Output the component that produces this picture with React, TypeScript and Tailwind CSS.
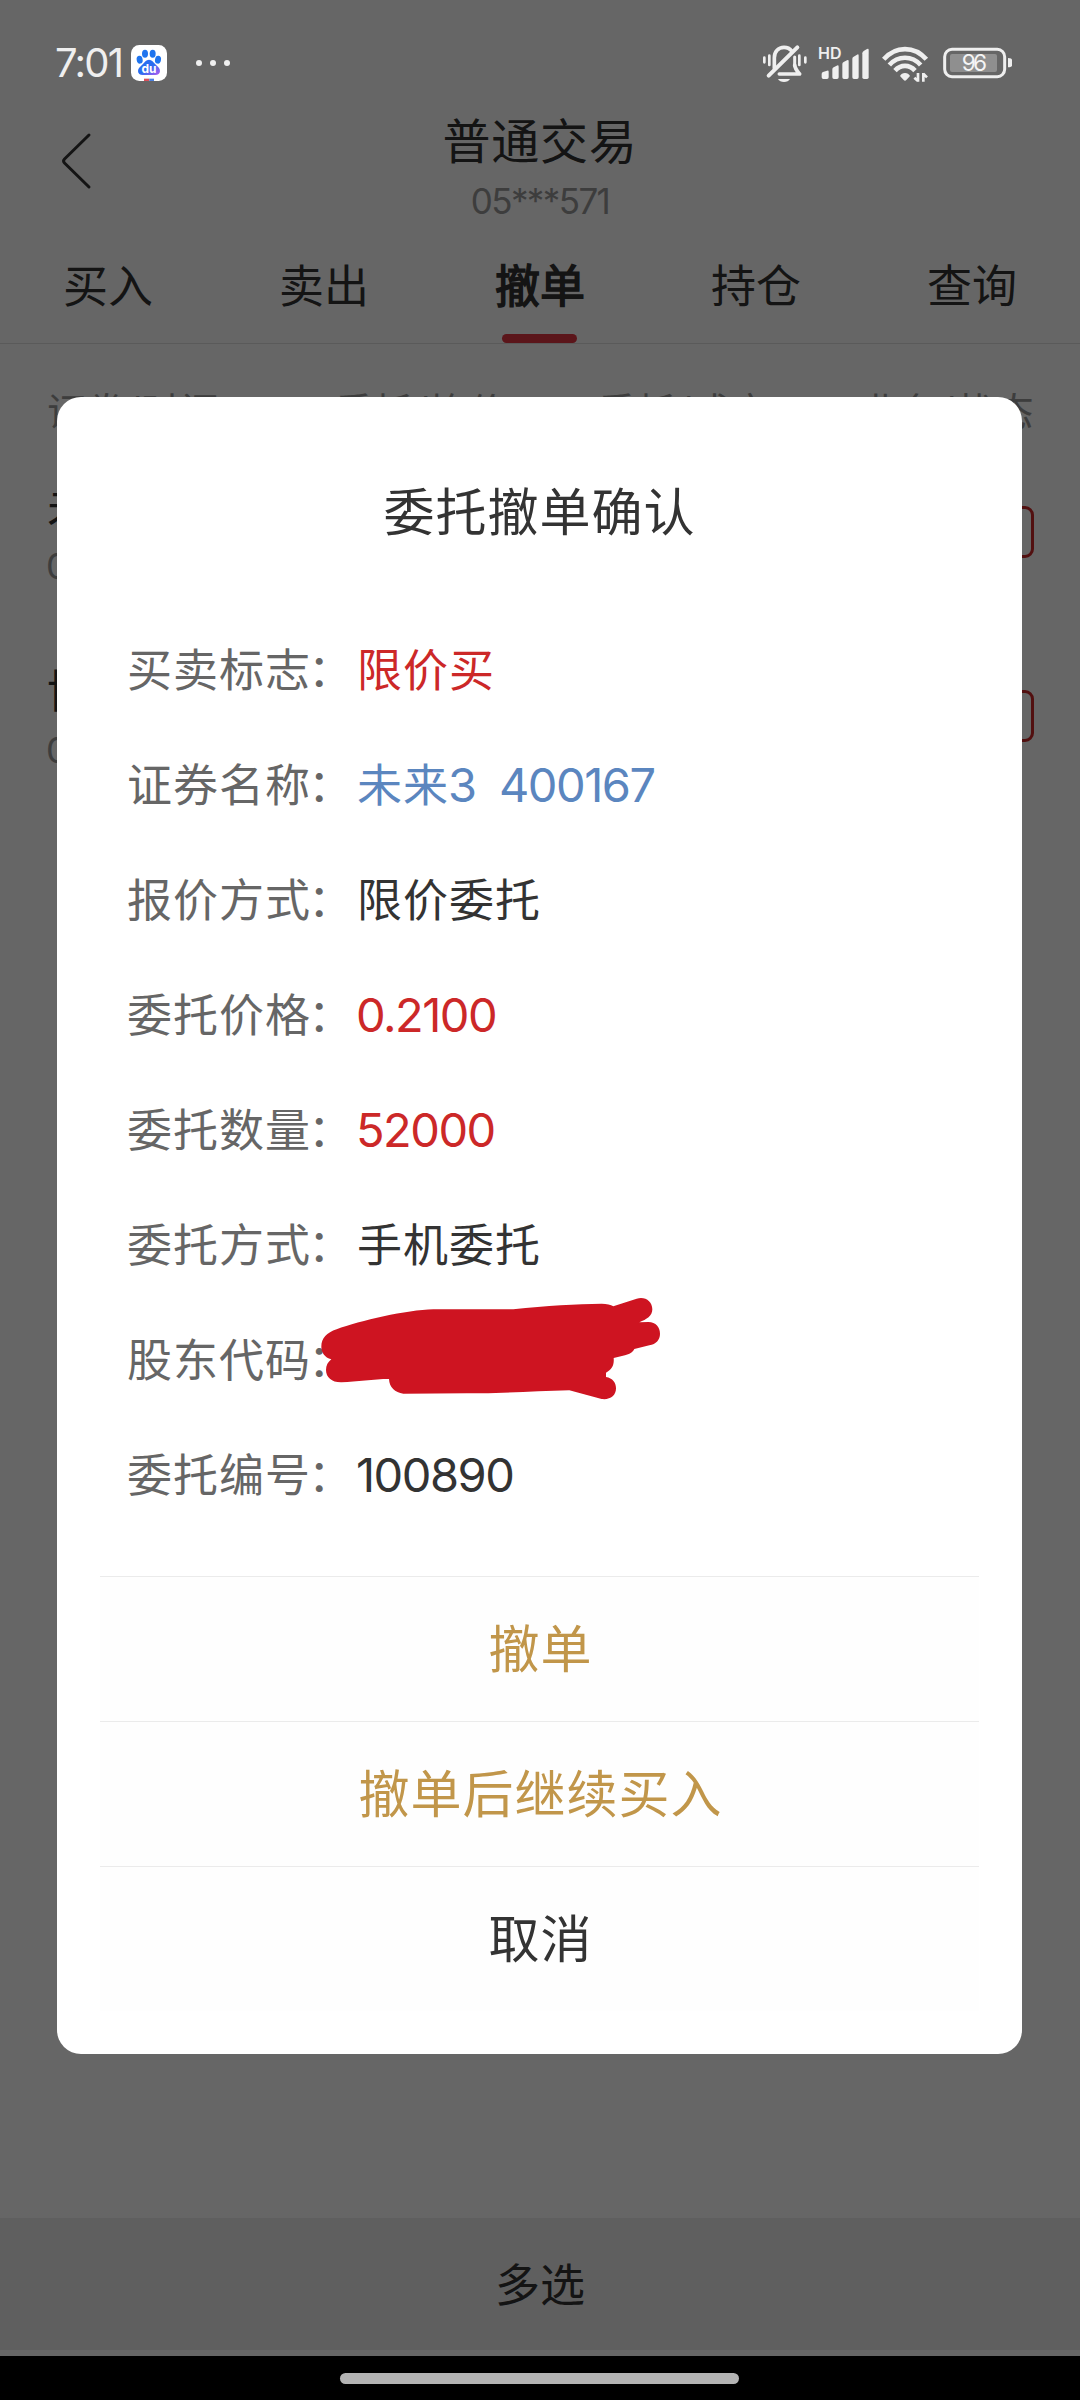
import type { ReactNode } from "react";

const TABS = ["买入", "卖出", "撤单", "持仓", "查询"];
const ACTIVE_TAB = "撤单";

const ORDERS = [
  { name: "未来3", time: "09:15:02" },
  { name: "博士眼镜", time: "09:15:02" },
];

type Detail = { label: string; text?: string; digits?: string; color: string; redacted?: boolean };

const DETAILS: Detail[] = [
  { label: "买卖标志", text: "限价买", color: "text-[#cc2828]" },
  { label: "证券名称", text: "未来", digits: "3  400167", color: "text-[#5b86bf]" },
  { label: "报价方式", text: "限价委托", color: "text-[#333333]" },
  { label: "委托价格", digits: "0.2100", color: "text-[#cc2828]" },
  { label: "委托数量", digits: "52000", color: "text-[#cc2828]" },
  { label: "委托方式", text: "手机委托", color: "text-[#333333]" },
  { label: "股东代码", color: "text-[#333333]", redacted: true },
  { label: "委托编号", digits: "100890", color: "text-[#333333]" },
];

const ACTIONS = [
  { label: "撤单", color: "text-[#c1964a]" },
  { label: "撤单后继续买入", color: "text-[#c1964a]" },
  { label: "取消", color: "text-[#333333]" },
];

function BaiduIcon() {
  return (
    <svg width="36" height="36" viewBox="0 0 108 108" aria-hidden>
      <defs>
        <linearGradient id="paw" x1="0" y1="0" x2="1" y2="1">
          <stop offset="0.5" stopColor="#2a6df0" />
          <stop offset="1" stopColor="#b45cf0" />
        </linearGradient>
      </defs>
      <rect width="108" height="108" rx="25" fill="#fff" />
      <g fill="#1f74ee">
        <ellipse cx="26" cy="44" rx="9" ry="12" transform="rotate(-10 26 44)" />
        <ellipse cx="42" cy="26" rx="9" ry="12" />
        <ellipse cx="65" cy="26" rx="9" ry="12" />
        <ellipse cx="81" cy="44" rx="9" ry="12" transform="rotate(10 81 44)" />
      </g>
      <path
        d="M54 44C63 44 67 51 73 58C81 65 87 70 87 78C87 86 81 90 73 90H35C27 90 21 86 21 78C21 70 28 65 35 58C41 51 45 44 54 44Z"
        fill="url(#paw)"
      />
      <text x="54" y="84" textAnchor="middle" fontSize="36" fontWeight="700" fill="#fff" className="font-['Inter',sans-serif]">
        du
      </text>
      <rect x="39" y="101" width="16" height="7" fill="#d9505a" />
      <rect x="55" y="101" width="14" height="7" fill="#4a80e0" />
    </svg>
  );
}

function MuteIcon() {
  return (
    <svg width="46" height="40" viewBox="0 0 138 120" fill="none" stroke="#efefef" strokeLinecap="round" aria-hidden>
      <g strokeWidth="8">
        <path d="M7 44V58M22 38V66M112 38V66M130 44V58" />
        <path d="M98 42V68" strokeWidth="9" />
      </g>
      <path d="M37 76V44C37 26 49 13 66 13C76 13 84 17 89 24" strokeWidth="11" />
      <path d="M106 13L20 98" strokeWidth="12" />
      <path d="M98 66C99 78 106 85 113 93H52" strokeWidth="11" strokeLinejoin="round" />
      <path d="M48 108H84C81 114 74 117 66 117C58 117 51 114 48 108Z" fill="#efefef" stroke="none" />
    </svg>
  );
}

function SignalIcon() {
  return (
    <svg width="52" height="36" viewBox="0 0 156 108" fill="#efefef" className="overflow-visible" aria-hidden>
      <text x="-3" y="43" fontSize="48" fontWeight="600" className="font-['Inter',sans-serif]">
        HD
      </text>
      <path d="M8 87Q8 83 12 81L24 77Q29 75 29 80V97Q29 102 24 102H13Q8 102 8 97Z" />
      <path d="M40 73Q40 69 44 67L53 62Q59 59 59 65V97Q59 102 54 102H45Q40 102 40 97Z" />
      <path d="M70 57Q70 53 74 51L84 46Q89 43 89 49V97Q89 102 84 102H75Q70 102 70 97Z" />
      <path d="M100 41Q100 37 104 35L114 29Q119 26 119 32V97Q119 102 114 102H105Q100 102 100 97Z" />
      <path d="M130 25Q130 21 134 18L144 12Q149 9 149 15V97Q149 102 144 102H135Q130 102 130 97Z" />
    </svg>
  );
}

function WifiIcon() {
  return (
    <svg width="48" height="38" viewBox="0 0 144 114" fill="none" stroke="#efefef" aria-hidden>
      <g strokeWidth="14">
        <path d="M5 43C41 2 97 2 133 43" />
        <path d="M22 60C48 31 90 31 116 60" />
        <path d="M39 77C56 58 82 58 99 77" />
      </g>
      <path d="M69 84C76 84 81 88 84 93L73 105Q69 109 65 105L54 93C57 88 62 84 69 84Z" fill="#efefef" stroke="none" />
      <path d="M108 84V110M108 108L97 98M124 110V84M124 86L135 97" strokeWidth="8" />
    </svg>
  );
}

function BatteryIcon() {
  return (
    <svg width="70" height="32" viewBox="0 0 210 96" className="overflow-visible" aria-hidden>
      <rect x="5" y="7" width="180" height="82" rx="22" fill="none" stroke="#efefef" strokeWidth="9" />
      <rect x="21" y="21" width="141" height="54" rx="6" fill="#8f8f8f" />
      <path d="M195 33Q207 33 207 39V55Q207 61 195 61Z" fill="#efefef" />
      <text x="94" y="73" textAnchor="middle" fontSize="68" fontWeight="400" textLength="76" fill="#f5f5f5" className="font-['Inter',sans-serif]">
        96
      </text>
    </svg>
  );
}

// Floats above the dimming layer, the way the system draws it
function StatusBar() {
  return (
    <div className="relative z-20 flex h-[126px] items-center justify-between pl-[55px] pr-[67px]">
      <div className="flex items-center">
        <span className="w-[76px] text-[40px] leading-none tracking-[-1.8px] text-[#efefef]">7:01</span>
        <BaiduIcon />
        <div className="ml-[29px] flex gap-2">
          <span className="size-1.5 rounded-full bg-[#efefef]" />
          <span className="size-1.5 rounded-full bg-[#efefef]" />
          <span className="size-1.5 rounded-full bg-[#efefef]" />
        </div>
      </div>
      <div className="flex items-center">
        <MuteIcon />
        <span className="ml-[11px]">
          <SignalIcon />
        </span>
        <span className="ml-[11px] mt-[2px]">
          <WifiIcon />
        </span>
        <span className="ml-[13px]">
          <BatteryIcon />
        </span>
      </div>
    </div>
  );
}

function Header() {
  return (
    <header className="grid h-[104px] grid-cols-[1fr_auto_1fr] text-[#333333]">
      <svg className="ml-[59px] mt-[6px]" width="34" height="58" viewBox="0 0 34 58" fill="none" stroke="#333" strokeWidth="3" strokeLinecap="round" aria-hidden>
        <path d="M30 3L5.500 27Q3.500 29 5.500 31L30 55" />
      </svg>
      <div className="flex flex-col items-center">
        <h1 className="mt-[-10px] text-[48px] leading-[52px] tracking-[0.8px]">普通交易</h1>
        <p className="mt-[15px] text-[35px] leading-9 tracking-[-1.6px] text-[#999999]">05***571</p>
      </div>
    </header>
  );
}

function Tabs() {
  return (
    <nav className="flex h-[114px] border-b border-[#e0e0e0] text-[45px] text-[#333333]">
      {TABS.map((tab) => {
        const active = tab === ACTIVE_TAB;
        return (
          <div key={tab} className="flex flex-1 flex-col items-center justify-between">
            <span className={active ? "mt-[22px] leading-[70px] [-webkit-text-stroke:1.5px_#333333]" : "mt-[22px] leading-[70px]"}>
              {tab}
            </span>
            {active && <span className="mr-px h-[9px] w-[75px] rounded-full bg-[#e33541]" />}
          </div>
        );
      })}
    </nav>
  );
}

function OrderList() {
  return (
    <section className="h-[1874px] pl-[47px] pr-[46px]">
      <div className="grid h-[130px] grid-cols-[288px_263px_262px_1fr] whitespace-nowrap pt-[41px] text-[39px] leading-[54px] tracking-[0.6px] text-[#999999]">
        <span>证券/时间</span>
        <span>委托/均价</span>
        <span>委托/成交</span>
        <span className="text-right">业务/状态</span>
      </div>
      {ORDERS.map((order) => (
        <div key={order.name} className="flex h-[184px] items-start justify-between">
          <div>
            <div className="mt-[2px] text-[45px] leading-[64px] text-[#333333]">{order.name}</div>
            <div className="ml-[-1px] mt-[6px] text-[36px] leading-[40px] tracking-[-1px] text-[#999999]">{order.time}</div>
          </div>
          <span className="mt-[32px] h-[52px] w-[110px] rounded-[9px] border-3 border-[#cc2828] text-center text-[32px] leading-[46px] text-[#cc2828]">
            撤单
          </span>
        </div>
      ))}
    </section>
  );
}

function Scribble() {
  return (
    <svg className="absolute left-[173px] top-[-22px]" width="400" height="140" viewBox="0 0 1200 420" fill="#ce1421" aria-hidden>
      <path d="M64 200C64 175 80 158 110 148C180 122 320 90 400 88L640 88C740 76 830 72 905 71Q928 71 940 79L1010 56C1035 48 1057 64 1057 88C1057 108 1040 118 1018 127L1045 126C1068 126 1080 142 1080 161C1080 180 1068 192 1048 196L1003 207C998 218 988 222 975 226L941 234C943 256 936 268 918 278V291C938 294 948 308 948 325C948 348 930 360 905 357L808 331C700 334 600 340 500 340L310 341C285 338 268 322 267 297C220 297 170 305 125 307C96 308 78 292 78 270C78 256 84 246 94 238C74 232 64 218 64 200Z" />
    </svg>
  );
}

function DetailRow({ detail, children }: { detail: Detail; children?: ReactNode }) {
  return (
    <div className="relative flex h-[115px] items-center whitespace-pre pt-[3px] text-[45px] tracking-[1px]">
      <span className="w-[230px] text-[#666666]">
        {detail.label}
        <span className="ml-[-3px]">：</span>
      </span>
      <span className={detail.color}>
        {detail.text}
        {detail.digits && <span className="ml-[-1px] text-[47px] leading-none tracking-[-1.5px]">{detail.digits}</span>}
      </span>
      {children}
    </div>
  );
}

function CancelDialog() {
  return (
    <div className="absolute left-[57px] top-[397px] z-10 flex h-[1657px] w-[965px] flex-col rounded-[24px] bg-white">
      <h2 className="mt-[80px] text-center text-[51px] leading-[72px] tracking-[1px] text-[#333333]">委托撤单确认</h2>
      <div className="mt-[63px] pl-[70px]">
        {DETAILS.map((detail) => (
          <DetailRow key={detail.label} detail={detail}>
            {detail.redacted && <Scribble />}
          </DetailRow>
        ))}
      </div>
      <div className="mx-[43px] mt-auto mb-[43px] bg-[#fefefe]">
        {ACTIONS.map((action) => (
          <button
            key={action.label}
            className={`flex h-[145px] w-full items-center justify-center border-t border-[#ebebeb] pl-[2px] pt-[3px] text-[51px] tracking-[1px] ${action.color}`}
          >
            {action.label}
          </button>
        ))}
      </div>
    </div>
  );
}

export default function App() {
  return (
    <div className="relative h-[2400px] w-[1080px] overflow-hidden bg-white font-['Inter','Noto_Sans_CJK_SC',sans-serif]">
      <StatusBar />
      <Header />
      <Tabs />
      <OrderList />
      <div className="flex h-[132px] items-center justify-center bg-[#ededed] pt-[3px] text-[45px] text-[#333333]">多选</div>
      <div className="h-[6px]" />
      <div className="relative z-20 flex h-[44px] justify-center bg-black pr-px pt-[17px]">
        <span className="h-[11px] w-[399px] rounded-full bg-[#b3b3b3]" />
      </div>
      <div className="absolute inset-0 bg-black/60" />
      <CancelDialog />
    </div>
  );
}
